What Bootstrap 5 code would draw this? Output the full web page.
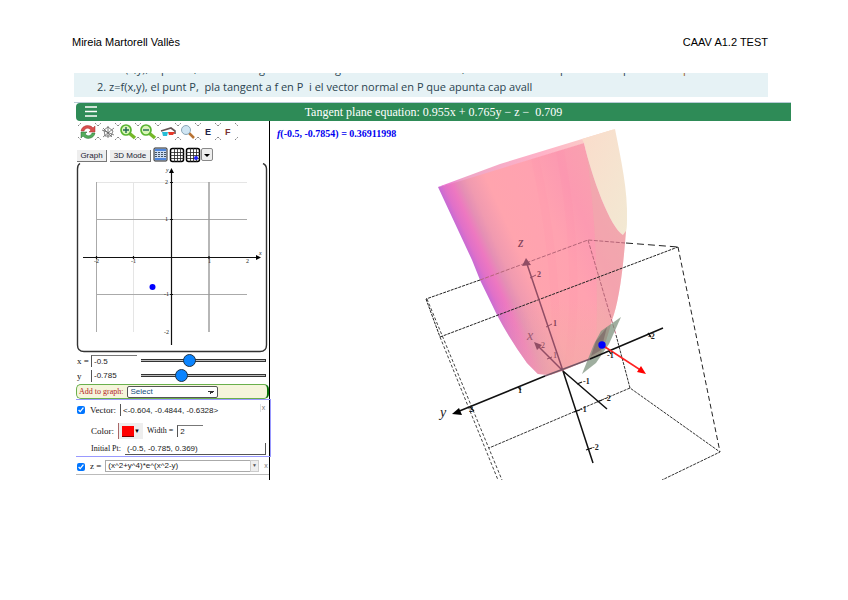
<!DOCTYPE html>
<html lang="ca">
<head>
<meta charset="utf-8">
<meta name="viewport" content="width=device-width, initial-scale=1">
<title>CAAV A1.2 TEST</title>
<link href="https://cdn.jsdelivr.net/npm/bootstrap@5.3.0/dist/css/bootstrap.min.css" rel="stylesheet">
<style>
body{background:#fff;color:#000;font-family:"Liberation Sans",sans-serif;font-size:11px;line-height:14px}
.sheet{padding:35px 57px 20px 72px}
.sheet-head{padding-right:23px;margin-bottom:24px}
.statement{margin:0 23px 5px 2px;height:24px;background:#e6f2f5;color:#2b4450;font:11px/16px "Open Sans","Noto Sans",sans-serif;overflow:hidden}
.statement svg{display:block;width:100%;height:6px}
.statement p{margin:0;padding-left:23px;white-space:nowrap}
.app{margin-left:2px;border-top:1px solid #b7cbd6}
.app-inner{margin-left:2px}
.titlebar{height:18px;background:#2e8b57;color:#fff;font:12px/19px "Liberation Serif",serif;border-radius:4px 0 0 4px}
.titlebar h1{font:inherit;margin:0;padding-right:22px}
.menu-btn{width:14px;height:17px;margin-left:8px;padding:0;border:0;background:none;color:#fff}
.side{width:194px;flex:none;border-right:1px solid #000;font-family:"Liberation Serif",serif;font-size:9px;line-height:12px}
.side svg,.plot svg,.menu-btn svg{display:block}
.tools{padding:2px 2px 0;height:25px}
.tool{width:20px;height:18px;padding:0;border:0;background:none}
.modes{height:17px;padding-left:1px}
.mode{height:12px;margin-top:3px;padding:0;border:0;border-right:1px solid #777;border-bottom:1px solid #777;background:#eee;color:#223;font:8px/11px "Liberation Sans",sans-serif}
.w-graph{width:30px;margin-right:3px}.w-mode{width:41px;margin-right:2px}
.tile{width:16px;height:16px;padding:0;border:0;background:none}
.drop{width:12px;height:13px;padding:0;border:1px solid #888;border-radius:2px;background:#eee}
.side label{color:#111;white-space:nowrap}
.side .tight{font-size:8px}
.field{font:8px/11px "Liberation Sans",sans-serif;height:12px;min-width:0;padding:0 2px;border:0;border-left:1px solid #555;border-radius:0;background:#fff;color:#222}
.field-top{border-top:1px solid #777}
.field-box{border:0;border-right:1px solid #555;border-bottom:1px solid #555}
.slide-row{height:15px}
.slide-row label{width:14px;margin-left:1px}
.slide-row .field{width:46px}
.knob{appearance:none;-webkit-appearance:none;width:125px;height:14px;margin:0 0 0 4px;background:none}
.knob::-webkit-slider-runnable-track{height:3px;background:#bbb;border:1px solid #333;border-width:1px 1px 1px 0}
.knob::-webkit-slider-thumb{-webkit-appearance:none;width:13px;height:13px;margin-top:-6px;border:1px solid #234;border-radius:50%;background:#0a84ff}
.add{height:15px;margin-top:1px;border:1px solid #6ab04c;border-right:2px solid #087008;border-radius:5px;background:#f5f5dc;padding-left:2px}
.side .add label{color:#b22222}
.add select{width:91px;height:12px;margin-left:4px;padding:0 12px 0 2px;border:1px solid #555;border-radius:2px;appearance:none;-webkit-appearance:none;background:linear-gradient(45deg,transparent 50%,#333 50%) 80px 4px/3px 3px no-repeat,linear-gradient(315deg,transparent 50%,#333 50%) 83px 4px/3px 3px no-repeat,#fff;color:#125080;font:8px/10px "Liberation Sans",sans-serif}
.vec{height:58px;padding:4px 0 0 1px;border:1px solid #99f;border-left:0;margin-right:-2px}
.check{width:8px;height:8px;margin:2px 5px 0 0;accent-color:#0075ff;flex:none}
.vec-row{height:18px}
.indent{padding-left:14px}
.swatch{width:25px;height:16px;padding:0 3px;border:0;border-left:1px solid #a66;background:#eee;font-size:6px}
.swatch i{width:13px;height:11px;background:#f00;border-bottom:1px solid #700}
.fn{height:18px;padding-left:1px;border-bottom:1px solid #bbb}
.closer{width:6px;padding:0;border:0;background:none;color:#777;font:7px/8px "Liberation Sans",sans-serif}
.f-vec{width:140px}.f-wid{width:26px}.f-pt{width:141px}.f-fn{width:145px;border:1px solid #aaa;border-right:0}
.combo{width:9px;height:12px;padding:0;border:1px solid #ccc;background:#eee;font-size:5px;line-height:8px;color:#555}
.plot svg{width:100%;height:auto}
.hold{min-height:359px}
</style>
<script src="https://cdn.jsdelivr.net/npm/bootstrap@5.3.0/dist/js/bootstrap.bundle.min.js"></script>
</head>
<body>
<div class="sheet">
  <header class="sheet-head d-flex justify-content-between"><span>Mireia Martorell Vallès</span><span>CAAV A1.2 TEST</span></header>
  <section class="statement">
    <svg fill="#2b4450" font-size="11" aria-hidden="true"><text y="0"><tspan x="51">(x,y),</tspan><tspan x="87">p</tspan><tspan x="120">,</tspan><tspan x="185">g</tspan><tspan x="261">g</tspan><tspan x="388">,</tspan><tspan x="486">p</tspan><tspan x="549">p</tspan><tspan x="609" fill="#a06020">p</tspan></text></svg>
    <p>2. z=f(x,y), el punt P, &nbsp;pla tangent a f en P &nbsp;i el vector normal en P que apunta cap avall</p>
  </section>
  <main class="app"><div class="app-inner">
    <div class="titlebar d-flex">
      <button class="menu-btn" aria-label="Menu"><svg width="14" height="17" stroke="#fff" stroke-width="1.4"><path d="M1 4H13M1 8.5H13M1 13H13"/></svg></button>
      <h1 class="flex-fill text-center">Tangent plane equation: 0.955x + 0.765y − z − &nbsp;0.709</h1>
    </div>
    <div class="d-flex hold">
      <aside class="side">
        <div class="tools d-flex">
          <button class="tool" aria-label="Reset"><svg width="20" height="18"><use href="#corners"/><path d="M3 8C4 2 12 1 15 5L17 3V9H11L13 7C10 4 7 5 6 8Z" fill="#d95050" stroke="#a33" stroke-width=".5"/><path d="M17 10C16 16 8 17 5 13L3 15V9H9L7 11C10 14 13 13 14 10Z" fill="#54ac5c" stroke="#286b33" stroke-width=".5"/></svg></button>
          <button class="tool" aria-label="Rotate"><svg width="20" height="18" fill="none" stroke="#666"><use href="#corners"/><path d="M10 3V15M4 7L16 12M16 5L5 14M5 5L14 14M6 7L10 4L15 8L13 13L7 13Z" stroke-width=".8"/></svg></button>
          <button class="tool" aria-label="Zoom in"><svg width="20" height="18"><use href="#corners"/><use href="#lens"/><path d="M5 7H11M8 4V10" stroke="#265" stroke-width="1.400"/></svg></button>
          <button class="tool" aria-label="Zoom out"><svg width="20" height="18"><use href="#corners"/><use href="#lens"/><path d="M5 7H11" stroke="#265" stroke-width="1.400"/></svg></button>
          <button class="tool" aria-label="3D glasses"><svg width="20" height="18"><use href="#corners"/><path d="M3 8L13 5L17 8V11" fill="none" stroke="#655" stroke-width="1.6"/><path d="M4 9H10L9 13H5Z" fill="#28bdd6"/><path d="M10 9H17L15 12H11Z" fill="#e5382a"/></svg></button>
          <button class="tool" aria-label="Find"><svg width="20" height="18"><use href="#corners"/><path d="M11 10L16 15" stroke="#b87333" stroke-width="2.5"/><circle cx="8" cy="7" r="4.5" fill="#cfe5f3" stroke="#8ba6b6"/></svg></button>
          <button class="tool" aria-label="Edit"><svg width="20" height="18"><use href="#corners"/><text x="7" y="12" font-family="Liberation Sans" font-size="9" font-weight="bold" fill="#224">E</text></svg></button>
          <button class="tool" aria-label="Format"><svg width="20" height="18"><use href="#corners"/><text x="7" y="12" font-family="Liberation Sans" font-size="9" font-weight="bold" fill="#733">F</text></svg></button>
        </div>
        <div class="modes d-flex align-items-center">
          <button class="mode w-graph">Graph</button><button class="mode w-mode">3D Mode</button>
          <button class="tile" aria-label="Surface"><svg width="16" height="16"><rect x="1" y="1" width="13" height="13" rx="1" fill="#cddcf0" stroke="#222"/><path d="M2 3H13M2 12H13" stroke="#246ad8" stroke-width="1.5"/><path d="M2 5.500H13M2 7.500H13M2 9.500H13" stroke="#456" stroke-dasharray="2 1"/></svg></button>
          <button class="tile" aria-label="Grid"><svg width="16" height="16"><use href="#grid"/></svg></button>
          <button class="tile" aria-label="Trace point"><svg width="16" height="16"><use href="#grid"/><circle cx="11" cy="11" r="2" fill="#22f"/></svg></button>
          <button class="drop" aria-label="More"><svg width="10" height="10"><path d="M2 4H8L5 7Z"/></svg></button>
        </div>
        <svg width="192" height="190" viewBox="76 163 192 190" font-family="Liberation Serif" font-size="6" fill="#222">
          <path d="M80 163.500Q77.500 165 77.500 169V345Q77.500 351.500 84 351.500H260Q266.500 351.500 266.500 345V169Q266.500 165 263 163.500" fill="none" stroke="#333" stroke-width="1.4"/>
          <path d="M133.500 182V332M96 182.500H247" stroke="#e5e5e5"/><path d="M96.500 182V332M96 219.500H247M96 294.500H247" stroke="#aaa"/><path d="M209 182V332" stroke="#999" stroke-width="1.4"/>
          <path d="M171.500 171V345M83 257.500H258M170 182.500H173M170 219.500H173M170 294.500H173M96.500 256V259M133.500 256V259M209 256V259" stroke="#111" stroke-width="1.2"/>
          <path d="M171.500 168L169 173H174ZM261 257.500L256 255V260Z" fill="#000"/>
          <circle cx="152.500" cy="287" r="3" fill="#00f"/>
          <text x="166" y="172" font-style="italic">y</text><text x="259" y="255" font-style="italic">x</text><text x="165" y="184">2</text><text x="165" y="221">1</text><text x="164" y="296">-1</text><text x="164" y="334">-2</text><text x="94" y="263">-2</text><text x="131" y="263">-1</text><text x="208" y="263">1</text><text x="246" y="263">2</text>
        </svg>
        <div class="slide-row d-flex align-items-center"><label for="px">x =</label><input class="field field-top" id="px" value="-0.5"><input class="knob" type="range" min="-2" max="2" step="any" value="-0.5" aria-label="x"></div>
        <div class="slide-row d-flex align-items-center"><label for="py">y</label><input class="field" id="py" value="-0.785"><input class="knob" type="range" min="-2" max="2" step="any" value="-0.785" aria-label="y"></div>
        <div class="add d-flex align-items-center"><label for="addsel" class="tight">Add to graph:</label><select id="addsel"><option>Select</option></select></div>
        <div class="vec">
          <div class="vec-row d-flex align-items-start"><input class="check" type="checkbox" checked aria-label="Show vector"><label for="vec" class="me-1">Vector:</label><input class="field f-vec" id="vec" value="&lt;-0.604, -0.4844, -0.6328&gt;"><button class="closer border-start">x</button></div>
          <div class="vec-row indent d-flex align-items-center"><label for="col" class="me-1">Color:</label><button class="swatch d-flex align-items-center justify-content-between" id="col"><i></i>▼</button><label for="wid" class="mx-1 tight">Width =</label><input class="field field-top f-wid" id="wid" value="2"></div>
          <div class="vec-row indent d-flex align-items-center"><label for="pt" class="me-1 tight">Initial Pt:</label><input class="field field-box f-pt" id="pt" value="(-0.5, -0.785, 0.369)"></div>
        </div>
        <div class="fn d-flex align-items-center"><input class="check" type="checkbox" checked aria-label="Show surface"><label for="fz" class="me-1">z =</label><input class="field f-fn" id="fz" value="(x^2+y^4)*e^(x^2-y)"><button class="combo" aria-label="History">▼</button><button class="closer ms-1">x</button></div>
      </aside>
      <section class="plot flex-fill">
        <svg viewBox="270 121 521 359" font-family="Liberation Serif" font-size="8" fill="#222">
          <defs>
            <linearGradient id="skin" gradientUnits="userSpaceOnUse" x1="438" y1="187" x2="620" y2="105"><stop offset="0" stop-color="#c56bd5"/><stop offset=".03" stop-color="#e070c8"/><stop offset=".07" stop-color="#ed78c0"/><stop offset=".11" stop-color="#e58fb4"/><stop offset=".15" stop-color="#f09ab0"/><stop offset=".24" stop-color="#ffa4ae"/><stop offset=".45" stop-color="#ffa2b0"/><stop offset=".6" stop-color="#fc9ab1"/><stop offset=".8" stop-color="#f8a2af"/><stop offset="1" stop-color="#ecb5aa"/></linearGradient>
            <linearGradient id="rim"><stop offset="0" stop-color="#ec66d6"/><stop offset=".15" stop-color="#efa6c6"/><stop offset=".6" stop-color="#ffb3c8"/><stop offset="1" stop-color="#f8dcc8"/></linearGradient>
            <linearGradient id="glow" x1="0" y1="0" x2="0" y2="1"><stop offset=".6" stop-color="#efada5" stop-opacity="0"/><stop offset="1" stop-color="#efada5" stop-opacity=".6"/></linearGradient>
            <linearGradient id="cream" x1="0" y1="0" x2="1" y2="1"><stop offset="0" stop-color="#fadccb"/><stop offset="1" stop-color="#f2e9d3"/></linearGradient>
            <clipPath id="bowl"><path d="M438 187L457 182L584 143C592 178 610 227 623 235L626 231C623 270 619 302 612 320C608 335 604 348 600 355L562 371L550 375L538 374L527 363Q509 338 497 315L480 280L472 260Z"/></clipPath>
            <g id="corners" fill="none" stroke="#777" stroke-width=".9" stroke-dasharray="2 1"><path d="M0 3L3 0M17 0L20 3M0 14L3 17M17 17L20 14"/></g>
            <g id="lens"><path d="M11 10L17 15" stroke="#76b82a" stroke-width="3.500"/><circle cx="8" cy="7" r="5" fill="#d9f5b8" stroke="#58b530" stroke-width="1.700"/></g>
            <g id="grid"><rect x="1.500" y="1.500" width="13" height="13" rx="2" fill="#fff" stroke="#000" stroke-width="1.500"/><path d="M5.500 1V15M8.500 1V15M11.500 1V15M1 5.500H15M1 8.500H15M1 11.500H15" stroke="#222" stroke-width=".8"/></g>
          </defs>
          <path d="M438 187L500 164L615 129L582 144L457 183Z" fill="url(#rim)"/>
          <path d="M582 139L615 129C621 160 628 190 627 220Q627 236 623 235C610 227 592 178 584 143Z" fill="url(#cream)"/>
          <path d="M438 187L457 182L584 143C592 178 610 227 623 235L626 231C623 270 619 302 612 320C608 335 604 348 600 355L562 371L550 375L538 374L527 363Q509 338 497 315L480 280L472 260Z" fill="url(#skin)"/>
          <g clip-path="url(#bowl)"><path d="M585 143Q600 240 596 350L640 360V220Z" fill="#ddc0a8" opacity=".25"/><path d="M535 158Q560 270 555 370M560 150Q582 270 568 368" fill="none" stroke="#ff80a8" stroke-width="8" opacity=".08"/><path d="M438 187H630V376H438Z" fill="url(#glow)"/></g>
          <path d="M480 280L588 240L625 243M588 240L616 335" fill="none" stroke="#b56578" stroke-width="1" stroke-dasharray="4 1.500"/>
          <path d="M626 243L678 247" stroke="#222" stroke-dasharray="7 4"/>
          <g fill="none" stroke="#222" stroke-dasharray="3 1"><path d="M480 280L426 299M440 337L678 247M426 299L440 337"/><path d="M678 247L720 452" stroke-dasharray="5 3"/><path d="M440 337L498 480M427 299L444 340L502 480" stroke-dasharray="3 2" stroke="#444"/><path d="M616 335L630 388L720 452L662 480M630 388L489 448" stroke="#333"/></g>
          <path d="M621 317L601 331L594 344L582 374L596 363L609 344Z" fill="#7a8f7a" opacity=".72"/><path d="M607 327L596 341L591 356L601 350Z" fill="#765f61" opacity=".6"/>
          <g fill="none" stroke-width="1.500"><path d="M527 264L563 371M536 344L563 371" stroke="#914d65"/><path d="M545 376L590 359" stroke="#735565"/><path d="M457 412L545 376M590 359L663 328M563 371L593 463M563 371L607 409" stroke="#111"/></g>
          <path d="M526 258L522 266L531 265ZM534 342L537 350L542 345Z" fill="#914d65"/><path d="M452 414L459 408L462 415Z" fill="#000"/>
          <path d="M530 278L536 275M546 327L552 324M547 359L552 357" stroke="#914d65"/><path d="M518 387L521 390M648 333L651 337M609 351L611 354M577 384L582 382M597 402L602 400M574 412L580 410M586 450L592 448M470 407L474 411" stroke="#111" stroke-width="1.300"/>
          <path d="M602 345L642 371" stroke="#f22" stroke-width="1.500"/><path d="M646 374L637 372L641 366Z" fill="#f00"/><circle cx="602" cy="345" r="3.700" fill="#00f"/>
          <g fill="#824158"><text x="518" y="247" font-size="14" font-style="italic">z</text><text x="527" y="340" font-size="14" font-style="italic" opacity=".75">x</text><text x="537" y="277" font-weight="bold">2</text><text x="553" y="326" font-weight="bold">1</text><text x="541" y="348">2</text><text x="553" y="358">1</text></g>
          <text x="440" y="417" font-size="14" font-style="italic">y</text>
          <g font-weight="bold"><text x="518" y="393">1</text><text x="469" y="412">2</text><text x="648" y="339">-2</text><text x="607" y="358">-1</text><text x="583" y="384">-1</text><text x="604" y="401">-2</text><text x="580" y="412">-1</text><text x="592" y="450">-2</text></g>
          <text x="277" y="137" font-size="10" font-weight="bold" fill="#0000f0"><tspan font-style="italic">f</tspan>(-0.5, -0.7854) = 0.36911998</text>
        </svg>
      </section>
    </div>
  </div></main>
</div>
</body>
</html>
